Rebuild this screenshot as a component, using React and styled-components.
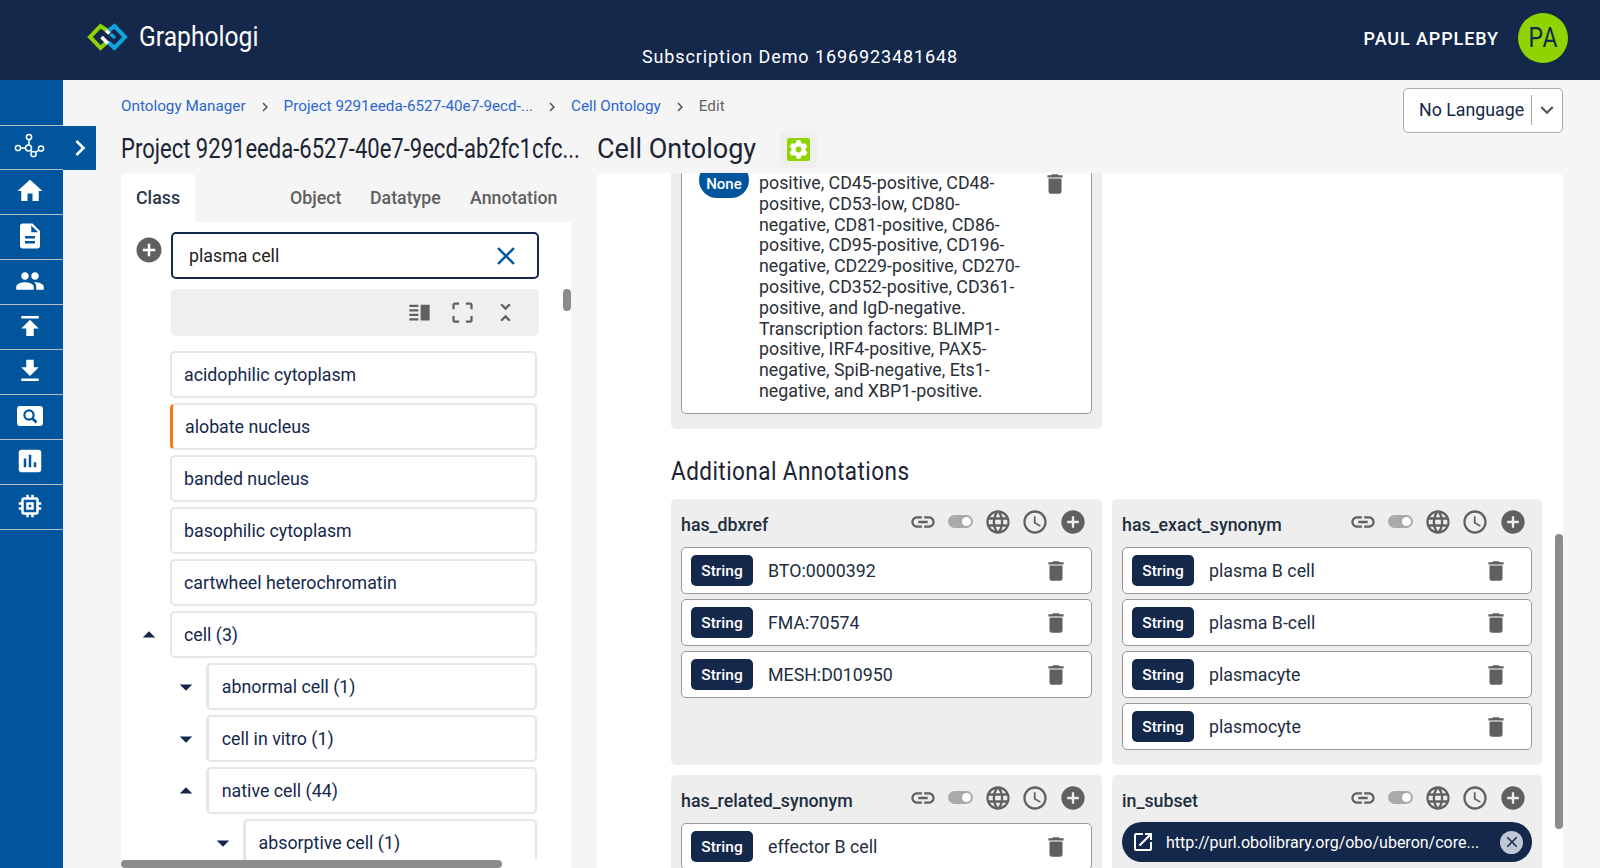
import React from 'react'
import styled, { createGlobalStyle } from 'styled-components'
import {
  MdHome, MdDescription, MdPeople, MdPublish, MdGetApp,
  MdAssessment, MdMemory, MdKeyboardArrowRight, MdChevronRight, MdExpandMore,
  MdAddCircle, MdClose, MdVerticalSplit, MdCropFree, MdUnfoldLess, MdArrowDropUp,
  MdArrowDropDown, MdDelete, MdLink, MdLanguage, MdAccessTime, MdOpenInNew,
} from 'react-icons/md'
import { FaCog } from 'react-icons/fa'

const NAVY = '#14284b'
const BLUE = '#00559c'

const GlobalStyle = createGlobalStyle`
  html, body { margin: 0; padding: 0; height: 100%; }
  body { font-family: Roboto, sans-serif; background: #f5f5f5; color: ${NAVY}; overflow: hidden; }
  * { box-sizing: border-box; }
`

const Page = styled.div`
  height: 868px;
  display: flex;
  flex-direction: column;
  overflow: hidden;
`

const TopBar = styled.header`
  height: 80px;
  flex: none;
  background: ${NAVY};
  color: #fff;
  display: grid;
  grid-template-columns: 1fr auto 1fr;
  padding: 0 32px;
`

const Brand = styled.div`
  display: flex;
  align-items: center;
  gap: 7px;
  height: 74px;
  margin-left: 52px;
`

/* the heading face of the app is narrower than anything installed, so squeeze Roboto */
const BrandName = styled.span`
  width: 120px;
  margin-bottom: 2px;
  font-size: 28px;
  white-space: nowrap;
  transform: scaleX(0.88);
  transform-origin: left center;
`

const Subscription = styled.div`
  align-self: end;
  padding-bottom: 13px;
  font-size: 18px;
  letter-spacing: 0.9px;
`

const UserArea = styled.div`
  display: flex;
  align-items: center;
  justify-content: flex-end;
  gap: 19px;
  height: 76px;
`

const UserName = styled.span`
  font-size: 18px;
  font-weight: 500;
  letter-spacing: 0.9px;
`

const Avatar = styled.div`
  width: 50px;
  height: 50px;
  border-radius: 50%;
  background: #8fd400;
  color: ${NAVY};
  display: flex;
  align-items: center;
  justify-content: center;
  font-size: 27px;
  letter-spacing: 1px;
  span { transform: scaleX(0.85); }
`

const Body = styled.div`
  flex: 1;
  display: flex;
  min-height: 0;
`

const Sidebar = styled.nav`
  width: 63px;
  flex: none;
  background: ${BLUE};
  padding-top: 45px;
  position: relative;
`

const SideItem = styled.div`
  height: 45px;
  display: flex;
  align-items: center;
  justify-content: center;
  padding: 0 3px 2px 0;
  color: #fff;
  font-size: 30px;
  border-bottom: 1px solid #b4bcc4;
  &:first-of-type { border-top: 1px solid #b4bcc4; }
`

const SideToggle = styled.div`
  position: absolute;
  left: 63px;
  top: 46px;
  width: 33px;
  height: 44px;
  background: ${BLUE};
  color: #fff;
  font-size: 32px;
  display: flex;
  align-items: center;
  justify-content: center;
`

const Content = styled.main`
  flex: 1;
  min-width: 0;
  padding: 0 37px 0 58px;
  display: flex;
  flex-direction: column;
`

const CrumbRow = styled.div`
  height: 51px;
  flex: none;
  display: flex;
  justify-content: space-between;
  align-items: flex-start;
  padding-top: 8px;
`

const Crumbs = styled.div`
  display: flex;
  align-items: center;
  height: 36px;
  font-size: 15.25px;
`

const Crumb = styled.span`
  color: ${p => (p.$current ? '#666' : '#2a66d0')};
`

const CrumbSep = styled.span`
  display: flex;
  color: #555;
  font-size: 18px;
  margin: 2px 10px 0 10px;
`

const LanguageSelect = styled.div`
  width: 160px;
  height: 45px;
  background: #fff;
  border: 1px solid #aaa;
  border-radius: 5px;
  display: flex;
  align-items: center;
  padding: 0 0 2px 15px;
  font-size: 17.8px;
  position: relative;
  z-index: 1;
`

const LanguageArrow = styled.span`
  margin-left: 7px;
  padding-left: 2px;
  height: 30px;
  border-left: 1px solid #aaa;
  display: flex;
  align-items: center;
  font-size: 26px;
  color: #555;
`

const Columns = styled.div`
  flex: 1;
  min-height: 0;
  display: flex;
  gap: 26px;
`

const LeftColumn = styled.section`
  width: 450px;
  flex: none;
  display: flex;
  flex-direction: column;
`

const RightColumn = styled.section`
  flex: 1;
  min-width: 0;
  display: flex;
  flex-direction: column;
`

const TitleRow = styled.div`
  height: 42px;
  flex: none;
  display: flex;
  align-items: center;
  padding-bottom: 6px;
`

const Title = styled.h1`
  margin: 0;
  width: ${p => p.$width}px;
  flex: none;
  font-weight: 400;
  font-size: 27px;
  white-space: nowrap;
  color: #1c2433;
  transform: scaleX(${p => p.$squeeze});
  transform-origin: left center;
`

const GearButton = styled.div`
  width: 37px;
  height: 37px;
  margin-left: 24px;
  background: #efefef;
  border-radius: 5px;
  display: flex;
  align-items: center;
  justify-content: center;
`

const GearTile = styled.div`
  width: 23px;
  height: 23px;
  background: #8fd400;
  border-radius: 2px;
  color: #fff;
  font-size: 19px;
  display: flex;
  align-items: center;
  justify-content: center;
`

const Tabs = styled.div`
  height: 49px;
  flex: none;
  display: flex;
  align-items: stretch;
  font-size: 17.8px;
  font-weight: 500;
`

const Tab = styled.div`
  width: ${p => p.$width}px;
  margin-left: ${p => p.$offset || 0}px;
  padding-left: ${p => (p.$active ? 15 : 0)}px;
  display: flex;
  align-items: center;
  background: ${p => (p.$active ? '#fff' : 'transparent')};
  color: ${p => (p.$active ? '#2b3648' : '#5f5f5f')};
  border-radius: 5px 5px 0 0;
`

const TreePanel = styled.div`
  flex: 1;
  min-height: 0;
  background: #fff;
  position: relative;
  overflow: hidden;
  padding-top: 10px;
`

const SearchRow = styled.div`
  display: flex;
  align-items: flex-start;
  padding: 0 32px 0 13px;
`

const AddCircle = styled.span`
  display: flex;
  width: 37px;
  margin-top: 3px;
  color: #606060;
  font-size: 30px;
`

const SearchBox = styled.div`
  flex: 1;
  height: 47px;
  border: 2px solid ${NAVY};
  border-radius: 5px;
  display: flex;
  align-items: center;
  justify-content: space-between;
  padding: 0 16px;
  font-size: 17.8px;
  color: #222;
`

const ClearIcon = styled.span`
  display: flex;
  font-size: 30px;
  color: ${BLUE};
`

const TreeTools = styled.div`
  height: 47px;
  margin: 10px 32px 15px 50px;
  background: #efefef;
  border-radius: 5px;
  display: flex;
  align-items: center;
  justify-content: flex-end;
  gap: 16px;
  padding-right: 20px;
  color: #606060;
  font-size: 27px;
  svg { display: block; }
`

const TreeList = styled.div`
  display: flex;
  flex-direction: column;
  gap: 5px;
  height: 509px;
  overflow: hidden;
`

const TreeRow = styled.div`
  flex: none;
  display: flex;
  align-items: center;
  padding-left: ${p => 8 + p.$depth * 36.8}px;
  padding-right: 34px;
`

const Caret = styled.span`
  width: 40.5px;
  flex: none;
  display: flex;
  justify-content: center;
  color: ${NAVY};
  font-size: 30px;
`

const Node = styled.div`
  flex: 1;
  height: 47px;
  background: #fff;
  border: 2px solid #e6e6e6;
  border-left: ${p => (p.$flag ? '3px solid #f47a14' : p.$nested ? '3px solid #e6e6e6' : '2px solid #e6e6e6')};
  border-radius: 5px;
  display: flex;
  align-items: center;
  padding-left: 12.5px;
  font-size: 17.8px;
`

const ThumbV = styled.div`
  position: absolute;
  right: 0;
  top: ${p => p.$top}px;
  width: 8px;
  height: ${p => p.$height}px;
  background: #8c8c8c;
  border-radius: 4px;
`

const ThumbH = styled.div`
  position: absolute;
  left: 0;
  bottom: 0;
  width: 381px;
  height: 8px;
  background: #8c8c8c;
  border-radius: 4px;
`

const DetailPanel = styled.div`
  flex: 1;
  min-height: 0;
  background: #fff;
  border-radius: 5px 5px 0 0;
  position: relative;
  overflow: hidden;
  padding: 0 21px 0 74px;
`

const TopGroup = styled.div`
  width: 431px;
  background: #eee;
  border-radius: 0 0 5px 5px;
  padding: 0 10px 15px;
`

const LongValue = styled.div`
  background: #fff;
  border: 1px solid #999;
  border-top: 0;
  border-radius: 0 0 5px 5px;
  height: 241px;
  display: flex;
  align-items: flex-start;
  padding: 0 23px 0 17px;
`

const LangPill = styled.span`
  width: 50px;
  height: 36px;
  margin-top: -11px;
  flex: none;
  border-radius: 18px;
  background: ${BLUE};
  color: #fff;
  font-size: 15px;
  font-weight: 500;
  display: flex;
  align-items: center;
  justify-content: center;
  padding-top: 8px;
`

const LongText = styled.div`
  width: 267px;
  margin-left: 10px;
  font-size: 17.8px;
  line-height: 20.8px;
  color: #2a2f38;
`

const Trash = styled.span`
  display: flex;
  margin-left: auto;
  margin-top: ${p => (p.$raised ? -2 : 0)}px;
  color: #606060;
  font-size: 26px;
`

const SectionHeading = styled.h2`
  margin: 0;
  height: 70px;
  display: flex;
  align-items: center;
  padding-top: 14px;
  font-weight: 400;
  font-size: 25px;
  letter-spacing: 0.5px;
  white-space: nowrap;
  color: #1c2433;
  transform: scaleX(0.9);
  transform-origin: left center;
`

const CardGrid = styled.div`
  display: grid;
  grid-template-columns: 431px 430px;
  gap: 10px;
`

const Card = styled.div`
  background: #eee;
  border-radius: 5px;
  padding: 10px 10px 15px;
`

const CardHead = styled.div`
  height: 38px;
  display: flex;
  align-items: flex-start;
  justify-content: space-between;
`

const CardTitle = styled.div`
  padding-top: 5px;
  font-size: 17.8px;
  font-weight: 500;
  color: #222d40;
`

const CardTools = styled.div`
  display: flex;
  align-items: center;
  gap: 8.5px;
  padding-right: 5px;
  color: #606060;
`

const ToolIcon = styled.span`
  width: 29px;
  height: 25px;
  display: flex;
  align-items: center;
  justify-content: center;
  font-size: 28px;
`

const ToggleTrack = styled.span`
  width: 25px;
  height: 13px;
  border-radius: 7px;
  background: #aaa;
  position: relative;
  &::after {
    content: '';
    position: absolute;
    right: 2px;
    top: 2px;
    width: 9px;
    height: 9px;
    border-radius: 50%;
    background: #fff;
  }
`

const ItemStack = styled.div`
  display: flex;
  flex-direction: column;
  gap: 5px;
`

const Item = styled.div`
  height: 47px;
  background: #fff;
  border: 1px solid #999;
  border-radius: 5px;
  display: flex;
  align-items: center;
  padding: 0 22px 0 9px;
  font-size: 17.8px;
  color: #222d40;
`

const TypeBadge = styled.span`
  width: 62px;
  height: 31px;
  margin-right: 15px;
  background: ${NAVY};
  color: #fff;
  border-radius: 5px;
  font-size: 15.5px;
  font-weight: 500;
  display: flex;
  align-items: center;
  justify-content: center;
`

const LinkChip = styled.div`
  height: 40px;
  margin-top: -1px;
  border-radius: 20px;
  background: ${NAVY};
  color: #fff;
  display: flex;
  align-items: center;
  padding: 0 9px;
  font-size: 16px;
`

const ChipIcon = styled.span`
  display: flex;
  font-size: 24px;
  margin-right: 11px;
`

const ChipText = styled.span`
  flex: 1;
  white-space: nowrap;
`

const ChipClose = styled.span`
  width: 23px;
  height: 23px;
  border-radius: 50%;
  background: #c0c7d5;
  color: ${NAVY};
  font-size: 18px;
  display: flex;
  align-items: center;
  justify-content: center;
`

function LogoMark() {
  return (
    <svg width="48" height="38" viewBox="0 0 48 38" fill="none">
      <path d="M23 12.5 L16.5 8 L6 19 L16.5 30 L23 24" stroke="#8fd400" strokeWidth="4" />
      <path d="M25 12.5 L30.5 8 L41 19 L30.5 30 L24 24" stroke="#11a5e0" strokeWidth="4" />
      <path d="M26.5 16 L31 20" stroke="#11a5e0" strokeWidth="3.4" />
      <path d="M17.5 19 L24 25.5 M22 12.5 L25.5 15.5" stroke="#fff" strokeWidth="3.6" />
    </svg>
  )
}

function GraphIcon() {
  return (
    <svg width="32" height="28" viewBox="0 0 32 28" fill="none" stroke="#fff" strokeWidth="1.5">
      <circle cx="15" cy="4" r="2.6" />
      <circle cx="14.5" cy="15" r="3" />
      <circle cx="4" cy="15" r="2.6" />
      <circle cx="19.5" cy="21" r="2.6" />
      <circle cx="27" cy="15.5" r="2.6" />
      <path d="M15 6.6 V12 M6.6 15 H11.5 M16.5 17.5 L18 18.8 M21.6 19.4 L25 17" />
    </svg>
  )
}

function ImageSearchIcon() {
  return (
    <svg width="26" height="20" viewBox="0 0 26 20">
      <rect width="26" height="20" rx="3" fill="#fff" />
      <circle cx="12" cy="9" r="4.6" fill="none" stroke={BLUE} strokeWidth="2.2" />
      <path d="M15.5 12.5 L19.5 16.5" stroke={BLUE} strokeWidth="2.6" />
    </svg>
  )
}

const leafRows = [
  ['acidophilic cytoplasm'],
  ['alobate nucleus', true],
  ['banded nucleus'],
  ['basophilic cytoplasm'],
  ['cartwheel heterochromatin'],
]

const nestedRows = [
  ['cell (3)', 0, 'up'],
  ['abnormal cell (1)', 1, 'down'],
  ['cell in vitro (1)', 1, 'down'],
  ['native cell (44)', 1, 'up'],
  ['absorptive cell (1)', 2, 'down'],
]

function CardHeader({ title }) {
  return (
    <CardHead>
      <CardTitle>{title}</CardTitle>
      <CardTools>
        <ToolIcon><MdLink /></ToolIcon>
        <ToolIcon><ToggleTrack /></ToolIcon>
        <ToolIcon><MdLanguage /></ToolIcon>
        <ToolIcon><MdAccessTime /></ToolIcon>
        <ToolIcon><MdAddCircle /></ToolIcon>
      </CardTools>
    </CardHead>
  )
}

function StringItem({ value }) {
  return (
    <Item>
      <TypeBadge>String</TypeBadge>
      {value}
      <Trash><MdDelete /></Trash>
    </Item>
  )
}

export default function App() {
  return (
    <Page>
      <GlobalStyle />
      <TopBar>
        <Brand><LogoMark /><BrandName>Graphologi</BrandName></Brand>
        <Subscription>Subscription Demo 1696923481648</Subscription>
        <UserArea>
          <UserName>PAUL APPLEBY</UserName>
          <Avatar><span>PA</span></Avatar>
        </UserArea>
      </TopBar>
      <Body>
        <Sidebar>
          <SideItem><GraphIcon /></SideItem>
          <SideItem><MdHome /></SideItem>
          <SideItem><MdDescription /></SideItem>
          <SideItem><MdPeople /></SideItem>
          <SideItem><MdPublish /></SideItem>
          <SideItem><MdGetApp /></SideItem>
          <SideItem><ImageSearchIcon /></SideItem>
          <SideItem><MdAssessment /></SideItem>
          <SideItem><MdMemory /></SideItem>
          <SideToggle><MdKeyboardArrowRight /></SideToggle>
        </Sidebar>
        <Content>
          <CrumbRow>
            <Crumbs>
              <Crumb>Ontology Manager</Crumb>
              <CrumbSep><MdChevronRight /></CrumbSep>
              <Crumb>Project 9291eeda-6527-40e7-9ecd-...</Crumb>
              <CrumbSep><MdChevronRight /></CrumbSep>
              <Crumb>Cell Ontology</Crumb>
              <CrumbSep><MdChevronRight /></CrumbSep>
              <Crumb $current>Edit</Crumb>
            </Crumbs>
            <LanguageSelect>
              No Language
              <LanguageArrow><MdExpandMore /></LanguageArrow>
            </LanguageSelect>
          </CrumbRow>
          <Columns>
            <LeftColumn>
              <TitleRow>
                <Title $width={450} $squeeze={0.816}>Project 9291eeda-6527-40e7-9ecd-ab2fc1cfc...</Title>
              </TitleRow>
              <Tabs>
                <Tab $active $width={74}>Class</Tab>
                <Tab $offset={95} $width={80}>Object</Tab>
                <Tab $width={100}>Datatype</Tab>
                <Tab $width={100}>Annotation</Tab>
              </Tabs>
              <TreePanel>
                <SearchRow>
                  <AddCircle><MdAddCircle /></AddCircle>
                  <SearchBox>
                    plasma cell
                    <ClearIcon><MdClose /></ClearIcon>
                  </SearchBox>
                </SearchRow>
                <TreeTools>
                  <MdVerticalSplit />
                  <MdCropFree />
                  <MdUnfoldLess />
                </TreeTools>
                <TreeList>
                  {leafRows.map(([label, flag]) => (
                    <TreeRow key={label} $depth={0}>
                      <Caret />
                      <Node $flag={flag}>{label}</Node>
                    </TreeRow>
                  ))}
                  {nestedRows.map(([label, depth, dir]) => (
                    <TreeRow key={label} $depth={depth}>
                      <Caret>{dir === 'up' ? <MdArrowDropUp /> : <MdArrowDropDown />}</Caret>
                      <Node $nested={depth > 0}>{label}</Node>
                    </TreeRow>
                  ))}
                </TreeList>
                <ThumbV $top={67} $height={22} />
                <ThumbH />
              </TreePanel>
            </LeftColumn>
            <RightColumn>
              <TitleRow>
                <Title $width={159} $squeeze={1}>Cell Ontology</Title>
                <GearButton><GearTile><FaCog /></GearTile></GearButton>
              </TitleRow>
              <DetailPanel>
                <TopGroup>
                  <LongValue>
                    <LangPill>None</LangPill>
                    <LongText>
                      positive, CD45-positive, CD48-positive, CD53-low, CD80-negative, CD81-positive, CD86-positive, CD95-positive, CD196-negative, CD229-positive, CD270-positive, CD352-positive, CD361-positive, and IgD-negative. Transcription factors: BLIMP1-positive, IRF4-positive, PAX5-negative, SpiB-negative, Ets1-negative, and XBP1-positive.
                    </LongText>
                    <Trash $raised><MdDelete /></Trash>
                  </LongValue>
                </TopGroup>
                <SectionHeading>Additional Annotations</SectionHeading>
                <CardGrid>
                  <Card>
                    <CardHeader title="has_dbxref" />
                    <ItemStack>
                      <StringItem value="BTO:0000392" />
                      <StringItem value="FMA:70574" />
                      <StringItem value="MESH:D010950" />
                    </ItemStack>
                  </Card>
                  <Card>
                    <CardHeader title="has_exact_synonym" />
                    <ItemStack>
                      <StringItem value="plasma B cell" />
                      <StringItem value="plasma B-cell" />
                      <StringItem value="plasmacyte" />
                      <StringItem value="plasmocyte" />
                    </ItemStack>
                  </Card>
                  <Card>
                    <CardHeader title="has_related_synonym" />
                    <ItemStack>
                      <StringItem value="effector B cell" />
                    </ItemStack>
                  </Card>
                  <Card>
                    <CardHeader title="in_subset" />
                    <LinkChip>
                      <ChipIcon><MdOpenInNew /></ChipIcon>
                      <ChipText>http://purl.obolibrary.org/obo/uberon/core...</ChipText>
                      <ChipClose><MdClose /></ChipClose>
                    </LinkChip>
                  </Card>
                </CardGrid>
                <ThumbV $top={361} $height={295} />
              </DetailPanel>
            </RightColumn>
          </Columns>
        </Content>
      </Body>
    </Page>
  )
}
